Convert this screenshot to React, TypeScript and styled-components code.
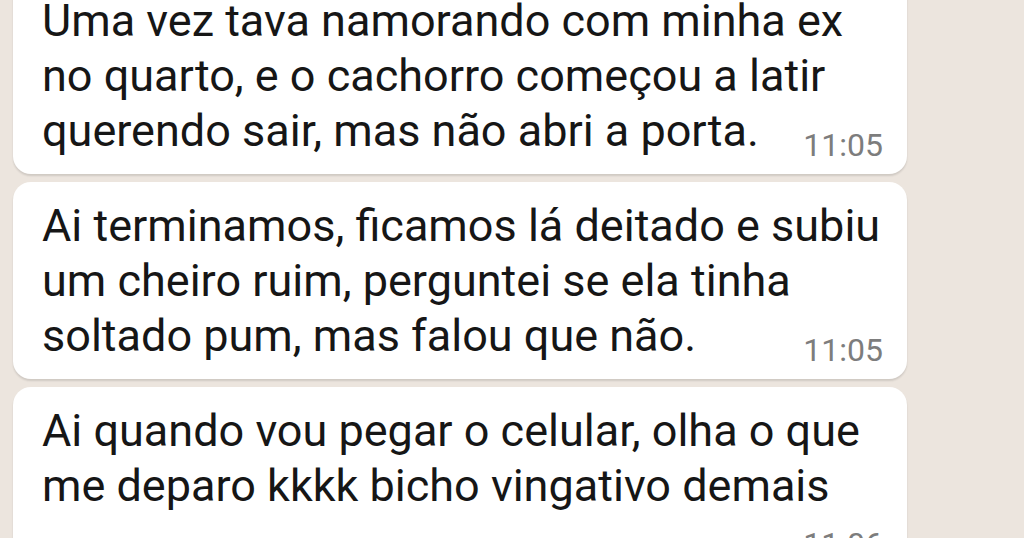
import styled, { createGlobalStyle } from "styled-components";

const GlobalStyle = createGlobalStyle`
  html, body {
    margin: 0;
    padding: 0;
    width: 1024px;
    height: 538px;
    overflow: hidden;
    background: #ece5de;
  }
`;

const Wallpaper = styled.div`
  width: 1024px;
  height: 538px;
  overflow: hidden;
  background-color: #ece5de;
  font-family: Roboto, "Noto Sans", Arial, sans-serif;
`;

const Thread = styled.div`
  display: flex;
  flex-direction: column;
  gap: 8px;
  margin-top: -23px;
  padding-left: 13px;
`;

const Bubble = styled.div`
  width: 894px;
  box-sizing: border-box;
  padding: 16px 24px 13px 29px;
  background: #ffffff;
  border-radius: 18px;
  box-shadow: 0 2px 2px rgba(0, 0, 0, 0.12);
`;

const Text = styled.p`
  margin: 0;
  font-size: 45px;
  line-height: 55px;
  color: #161616;
`;

const Time = styled.div<{ $below?: boolean }>`
  margin-top: ${(p) => (p.$below ? "15px" : "-29px")};
  text-align: right;
  font-size: 32px;
  line-height: 32px;
  color: #7d7d7d;
`;

const messages = [
  {
    lines: [
      "Uma vez tava namorando com minha ex",
      "no quarto, e o cachorro começou a latir",
      "querendo sair, mas não abri a porta.",
    ],
    time: "11:05",
  },
  {
    lines: [
      "Ai terminamos, ficamos lá deitado e subiu",
      "um cheiro ruim, perguntei se ela tinha",
      "soltado pum, mas falou que não.",
    ],
    time: "11:05",
  },
  {
    lines: [
      "Ai quando vou pegar o celular, olha o que",
      "me deparo kkkk bicho vingativo demais",
    ],
    time: "11:06",
    below: true,
  },
];

function App() {
  return (
    <Wallpaper>
      <GlobalStyle />
      <Thread>
        {messages.map((m, i) => (
          <Bubble key={i}>
            <Text>
              {m.lines.map((l, j) => (
                <span key={j}>
                  {l}
                  {j < m.lines.length - 1 && <br />}
                </span>
              ))}
            </Text>
            <Time $below={m.below}>{m.time}</Time>
          </Bubble>
        ))}
      </Thread>
    </Wallpaper>
  );
}

export default App;
